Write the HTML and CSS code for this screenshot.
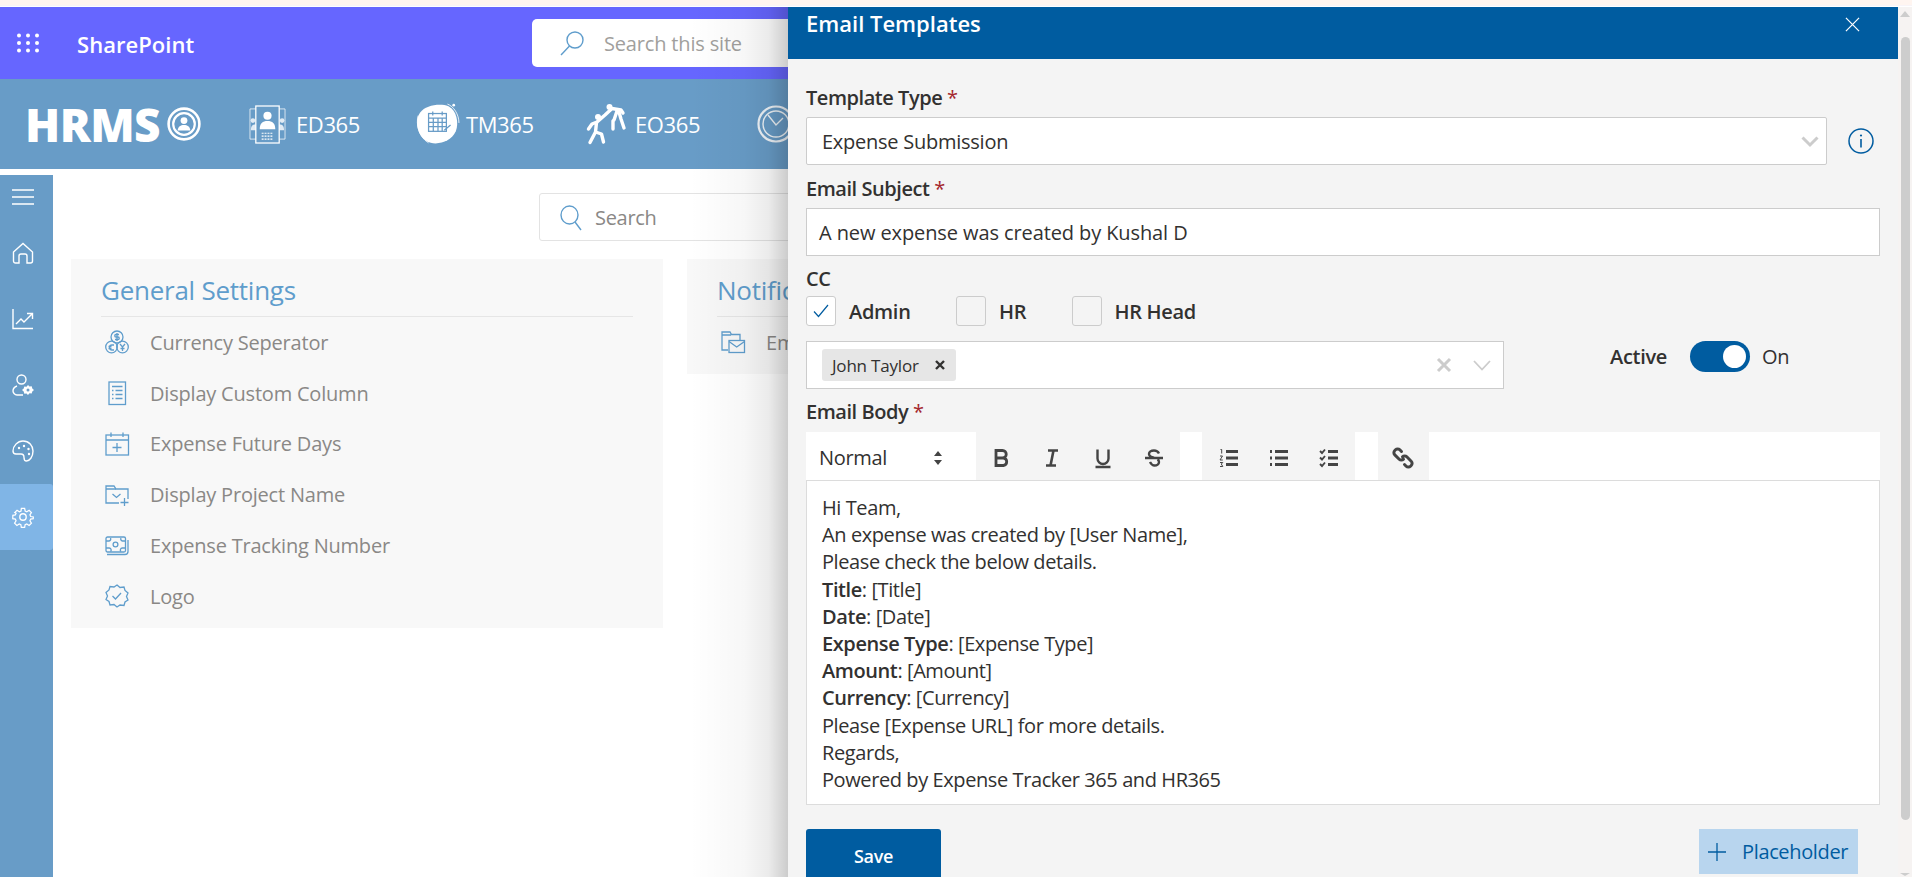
FILE: index.html
```html
<!DOCTYPE html>
<html lang="en">
<head>
<meta charset="utf-8">
<title>Email Templates</title>
<link rel="stylesheet" href="styles.css">
</head>
<body>
<div class="page">
  <div class="strip"></div>
  <header class="suitebar">
    <svg class="waffle" viewBox="0 0 24 20"><g fill="#fff"><circle cx="3" cy="2.5" r="2"/><circle cx="12" cy="2.5" r="2"/><circle cx="21" cy="2.5" r="2"/><circle cx="3" cy="10" r="2"/><circle cx="12" cy="10" r="2"/><circle cx="21" cy="10" r="2"/><circle cx="3" cy="17.5" r="2"/><circle cx="12" cy="17.5" r="2"/><circle cx="21" cy="17.5" r="2"/></g></svg>
    <span class="brand">SharePoint</span>
    <div class="site-search">
      <svg class="site-search-icon" viewBox="0 0 26 26" fill="none" stroke="#5f9dcc" stroke-width="1.4"><circle cx="16" cy="10" r="8"/><path d="M10.5 16 2 25"/></svg>
      <span>Search this site</span>
    </div>
  </header>
  <nav class="hrbar">
    <div class="logo">
      <span class="logo-text">HRMS</span>
      <svg class="logo-mark" viewBox="0 0 34 34"><circle cx="17" cy="17" r="15.4" fill="none" stroke="#fff" stroke-width="2.6"/><circle cx="17" cy="17" r="10.8" fill="none" stroke="#fff" stroke-width="2.2"/><circle cx="17" cy="13.6" r="3.4" fill="#fff"/><path d="M10.6 23.6c.5-4 3-5.6 6.4-5.6s5.900 1.600 6.400 5.600z" fill="#fff"/></svg>
    </div>
    <a class="app app-ed">
      <svg class="app-icon-ed" viewBox="0 0 38 40" fill="none" stroke="#fff"><path d="M7 4H1v31h6M31 4h6v31h-6" stroke-opacity=".75"/><rect x="7" y="1" width="24" height="38" stroke-width="1.3"/><circle cx="19" cy="11" r="4.200" fill="#fff" stroke="none"/><path d="M11 25c0-6 3-8.500 8-8.500s8 2.500 8 8.500z" fill="#fff" stroke="none"/><circle cx="4" cy="16" r="2.400" fill="#fff" fill-opacity=".8" stroke="none"/><path d="M2 26c0-4 1-6 5-6v6zM36 26c0-4-1-6-5-6v6z" fill="#fff" fill-opacity=".8" stroke="none"/><circle cx="34" cy="16" r="2.400" fill="#fff" fill-opacity=".8" stroke="none"/><path d="M13 29h12M13 32h12M13 35h12" stroke-width="1.200" stroke-dasharray="2 1"/></svg>
      <span>ED365</span>
    </a>
    <a class="app app-tm">
      <svg class="app-icon-tm" viewBox="0 0 42 40"><path d="M4 9C9 2 23 0 31 3c8 4 10 16 7 24-4 9-15 13-24 11C6 36 1 27 1 19c0-4 1-7 3-10z" fill="#fff"/><path d="M2 12C0 20 2 32 12 38M30 1c6 2 11 10 11 18" fill="none" stroke="#fff" stroke-width=".8"/><circle cx="36" cy="2" r="1.300" fill="#fff"/><g fill="none" stroke="#689cc7" stroke-width="1.200"><rect x="12" y="10" width="17" height="17"/><path d="M12 14.500h17M16 8v4M25 8v4M12 18.500h17M12 22.500h17M16.500 14.500V27M21 14.500V27M25 14.500V27M27 26l6-5"/></g></svg>
      <span>TM365</span>
    </a>
    <a class="app app-eo">
      <svg class="app-icon-eo" viewBox="0 0 40 40" fill="none" stroke="#fff" stroke-width="3.400" stroke-linecap="round" stroke-linejoin="round"><circle cx="12" cy="13" r="3" fill="#fff" stroke="none"/><circle cx="23.500" cy="3" r="3" fill="#fff" stroke="none"/><path d="M2.500 25 6 20l5-2 8-7 7-6.500 9 1.500 2 3"/><path d="M10.500 18.500 9.500 28 4 38.500M9.500 28l6 2 2 8"/><path d="M31 7l-3 9-1 1v8M33 8l2 7 3 9"/></svg>
      <span>EO365</span>
    </a>
    <svg class="app-icon-clock" viewBox="0 0 38 38" fill="none" stroke="#fff" stroke-opacity=".9"><circle cx="19" cy="19" r="17.500" stroke-width="2.200"/><circle cx="19" cy="19" r="13" stroke-width="1.400"/><path d="M11 10l8 10 7-7" stroke-width="1.400"/></svg>
  </nav>
  <div class="main">
    <aside class="sidebar">
      <div class="side-toggle"><svg class="side-icon-menu" viewBox="0 0 22 16" stroke="#fff" stroke-width="1.400"><path d="M0 1h22M0 8h22M0 15h22"/></svg></div>
      <div class="side-item"><svg class="side-icon" viewBox="0 0 22 22" fill="none" stroke="#fff" stroke-width="1.400"><path d="M1.500 10 11 1.500 20.500 10v9a2 2 0 0 1-2 2H15v-7a2 2 0 0 0-2-2H9a2 2 0 0 0-2 2v7H3.500a2 2 0 0 1-2-2z"/></svg></div>
      <div class="side-item"><svg class="side-icon" viewBox="0 0 22 22" fill="none" stroke="#fff" stroke-width="1.400"><path d="M1 1v19.500h20M4 16l5-5 3 3 8-8M15 5.500h5.500V11"/></svg></div>
      <div class="side-item"><svg class="side-icon" viewBox="0 0 22 22" fill="none" stroke="#fff" stroke-width="1.400"><circle cx="9.500" cy="5.500" r="4.500"/><path d="M5 12c-3 1-4 3.500-4 5s1.500 4 4 4h6"/><path d="M16 11l1.500 1.600 2.200-.4.600 2.200 1.700 1.500-1.700 1.500-.6 2.200-2.200-.4L16 21l-1.500-1.600-2.200.4-.6-2.200-1.700-1.500 1.700-1.500.6-2.200 2.200.4z" fill="#fff" stroke="none"/><circle cx="16" cy="16" r="1.500" fill="#689cc7" stroke="none"/></svg></div>
      <div class="side-item"><svg class="side-icon" viewBox="0 0 22 22" fill="none" stroke="#fff" stroke-width="1.400"><path d="M11 1c6 0 10 4.500 10 10 0 6-3.500 10-6.500 10-2 0-2.500-1.500-2.500-3.500 0-2-1-3.500-3-3.500H4c-2 0-3-1-3-3C1 6 5.500 1 11 1z"/><g fill="#fff" stroke="none"><circle cx="7" cy="8" r="1.200"/><circle cx="12" cy="6" r="1.200"/><circle cx="16.500" cy="9" r="1.200"/><circle cx="17" cy="14" r="1.200"/></g></svg></div>
      <div class="side-item side-item-active"><svg class="side-icon" viewBox="0 0 24 24" fill="none" stroke="#fff" stroke-width="1.500"><circle cx="12" cy="12" r="3.500"/><path d="M10 1.500h4l.6 3.200 2 .9 2.800-1.800 2.800 2.800-1.800 2.800.9 2 3.200.6v0l-.1 2-3.100.6-.9 2 1.800 2.800-2.800 2.800-2.800-1.800-2 .9-.6 3.200h-4l-.6-3.200-2-.9-2.800 1.800-2.800-2.800 1.800-2.800-.9-2-3.100-.6.100-4 3-.6.900-2L2 6.600l2.800-2.800 2.800 1.800 2-.9z" transform="translate(1.200 1.200) scale(.9)"/></svg></div>
    </aside>
    <section class="content">
      <div class="search-row">
        <div class="page-search">
          <svg class="page-search-icon" viewBox="0 0 22 26" fill="none" stroke="#5f9dcc" stroke-width="1.400"><ellipse cx="9.500" cy="10" rx="8.500" ry="9"/><path d="m15 17 6 8"/></svg>
          <span>Search</span>
        </div>
      </div>
      <div class="cards">
        <div class="card card-general">
          <h2 class="card-title">General Settings</h2>
          <ul class="card-list">
            <li class="card-item"><svg class="item-icon" viewBox="0 0 24 24" fill="none" stroke="#5f9dcc" stroke-width="1.300"><circle cx="12" cy="7" r="6"/><circle cx="6.500" cy="17" r="5.800"/><circle cx="17.500" cy="17" r="5.800"/><path d="M14 4.500h-3a1.200 1.200 0 0 0 0 2.500h2a1.200 1.200 0 0 1 0 2.500h-3M12 3v8M9 15h-2a2 2 0 0 0 0 5h2M3.500 16.500h3M3.500 18.500h3M15 14l2.500 3 2.500-3M17.500 17v4M15.500 18.500h4"/></svg><span>Currency Seperator</span></li>
            <li class="card-item"><svg class="item-icon" viewBox="0 0 24 24" fill="none" stroke="#5f9dcc" stroke-width="1.300"><rect x="4" y="1" width="16.500" height="22.500"/><path d="M7 5.500h10.500M7 9.500h1.500M10.500 9.500h7M7 13.500h1.500M10.500 13.500h7M7 17.500h1.500M10.500 17.500h7"/></svg><span>Display Custom Column</span></li>
            <li class="card-item"><svg class="item-icon" viewBox="0 0 24 24" fill="none" stroke="#5f9dcc" stroke-width="1.300"><rect x="1" y="3" width="22.500" height="20"/><path d="M1 8h22.500M6 .5v4.500M18 .5v4.500M12 11v9M7.500 15.500h9"/></svg><span>Expense Future Days</span></li>
            <li class="card-item"><svg class="item-icon" viewBox="0 0 24 24" fill="none" stroke="#5f9dcc" stroke-width="1.300"><path d="M14 20H1V3h8l2 3h12v10"/><path d="M1 6h10M7.500 11l4 3.500 4-3.500M19.500 15v8M15.500 19.500h8"/></svg><span>Display Project Name</span></li>
            <li class="card-item"><svg class="item-icon" viewBox="0 0 24 24" fill="none" stroke="#5f9dcc" stroke-width="1.300"><rect x="1" y="3" width="19.500" height="15" rx="1.500"/><circle cx="10.500" cy="10.500" r="2.400"/><path d="M1 7h3a2 2 0 0 0 1.500-3M20.500 7h-3A2 2 0 0 1 16 4M1 14h3a2 2 0 0 1 1.500 3.500M20.500 14h-3a2 2 0 0 0-1.500 3.500M2 20.500h18a3 3 0 0 0 3-3V6"/></svg><span>Expense Tracking Number</span></li>
            <li class="card-item"><svg class="item-icon" viewBox="0 0 24 24" fill="none" stroke="#5f9dcc" stroke-width="1.300"><path d="M12 1l3 2.500 4-.5 1 3.500 3 2.500-1.500 3.500 1.500 3.500-3 2-1 3.500-4-.5L12 23l-3-2.500-4 .5-1-3.500-3-2L2.500 12 1 8.500 4 6l1-3.500 4 .5z"/><path d="m7.500 12 3 3 5.500-6"/></svg><span>Logo</span></li>
          </ul>
        </div>
        <div class="card card-notify">
          <h2 class="card-title">Notifications</h2>
          <ul class="card-list">
            <li class="card-item"><svg class="item-icon" viewBox="0 0 24 24" fill="none" stroke="#5f9dcc" stroke-width="1.300"><path d="M7 20H1V2h8l1.500 2.500H19V10M1 5h9"/><rect x="8" y="10.500" width="15.500" height="12"/><path d="m8 11.500 7.700 5.500 7.800-5.500"/></svg><span>Email Templates</span></li>
          </ul>
        </div>
      </div>
    </section>
  </div>

  <div class="panel-shade"></div>
  <aside class="panel">
    <div class="panel-header">
      <h1 class="panel-title">Email Templates</h1>
      <svg class="panel-close" viewBox="0 0 16 16" stroke="#fff" stroke-width="1.300"><path d="m1 1 14 14M15 1 1 15"/></svg>
    </div>
    <div class="panel-body">
      <label class="field-label label-type">Template Type <em>*</em></label>
      <div class="type-row">
        <div class="select-box">
          <span>Expense Submission</span>
          <svg class="chev" viewBox="0 0 18 11" fill="none" stroke="#cccccc" stroke-width="3"><path d="m1.500 1.500 7.500 7.500 7.500-7.500"/></svg>
        </div>
        <svg class="info-icon" viewBox="0 0 26 26" fill="none" stroke="#005ca0"><circle cx="13" cy="13" r="12" stroke-width="1.500"/><path d="M13 11v8.500" stroke-width="1.600"/><circle cx="13" cy="7.500" r="1.100" fill="#005ca0" stroke="none"/></svg>
      </div>
      <label class="field-label label-subject">Email Subject <em>*</em></label>
      <div class="text-box">A new expense was created by Kushal D</div>
      <label class="field-label label-cc">CC</label>
      <div class="check-row">
        <div class="check check-admin"><span class="check-box"><svg class="check-mark" viewBox="0 0 16 14" fill="none" stroke="#005ca0" stroke-width="1.200"><path d="m1 7.500 4.500 5L15 1"/></svg></span><span>Admin</span></div>
        <div class="check check-hr"><span class="check-box"></span><span>HR</span></div>
        <div class="check"><span class="check-box"></span><span>HR Head</span></div>
      </div>
      <div class="people-row">
        <div class="people-box">
          <span class="chip"><span>John Taylor</span><svg class="chip-x" viewBox="0 0 10 10" stroke="#323130" stroke-width="2.400"><path d="m1 1 8 8M9 1 1 9"/></svg></span>
          <svg class="clear-x" viewBox="0 0 16 16" stroke="#cccccc" stroke-width="3"><path d="m2 2 12 12M14 2 2 14"/></svg>
          <svg class="people-chev" viewBox="0 0 18 11" fill="none" stroke="#cccccc" stroke-width="1.800"><path d="m1 1 8 8.500L17 1"/></svg>
        </div>
        <div class="toggle-group">
          <span class="toggle-label">Active</span>
          <span class="toggle"><span class="toggle-knob"></span></span>
          <span class="toggle-state">On</span>
        </div>
      </div>
      <label class="field-label label-body">Email Body <em>*</em></label>
      <div class="toolbar">
        <div class="tool-select"><span>Normal</span><svg class="tool-updown" viewBox="0 0 10 16" fill="#444"><path d="M5 1l4 5H1zM5 15l4-5H1z"/></svg></div>
        <div class="tool-group tool-group-format">
          <svg class="tool" viewBox="0 0 20 20" fill="none" stroke="#444" stroke-width="2.800"><path d="M5 2.500h6.500a3.500 3.500 0 0 1 0 7.500H5zM5 10h7.500a3.800 3.800 0 0 1 0 7.500H5z"/></svg>
          <svg class="tool" viewBox="0 0 20 20" fill="none" stroke="#444" stroke-width="2.600"><path d="M6 2.500h10M4 17.500h10M11.500 2.500l-3 15"/></svg>
          <svg class="tool" viewBox="0 0 20 20" fill="none" stroke="#444" stroke-width="2.400"><path d="M4.500 1.500v9a5.500 5.500 0 0 0 11 0v-9M2.500 19h15"/></svg>
          <svg class="tool" viewBox="0 0 20 20" fill="none" stroke="#444" stroke-width="2.400"><path d="M15 5.500C14 3.500 12 2.500 10 2.500c-3 0-5 1.500-5 3.500s2 3 5 3.700M6 14c1 2 2 3.500 4.500 3.500s4.500-1.500 4.500-3.500c0-1.200-.5-2-1.500-2.600M1 10h18"/></svg>
        </div>
        <div class="tool-group tool-group-list">
          <svg class="tool" viewBox="0 0 20 20" fill="none" stroke="#444" stroke-width="2.800"><path d="M7 3.500h12M7 10h12M7 16.500h12"/><path d="M1.500 1.500h1.200v4M1 8h2.500L1 12h2.800M1 14.500h2.800l-1.500 1.500 1.500 2.500H1" stroke-width="1"/></svg>
          <svg class="tool" viewBox="0 0 20 20" fill="none" stroke="#444" stroke-width="2.800"><path d="M6 3.500h13M6 10h13M6 16.500h13"/><path d="M1 3.500h2M1 10h2M1 16.500h2"/></svg>
          <svg class="tool" viewBox="0 0 20 20" fill="none" stroke="#444" stroke-width="2.800"><path d="M9 3.500h10M9 10h10M9 16.500h10"/><path d="m1 3 2 2 3-3.500M1 9.500l2 2 3-3.500M1 16l2 2 3-3.500" stroke-width="1.900"/></svg>
        </div>
        <div class="tool-group tool-group-link">
          <svg class="tool" viewBox="0 0 20 20" fill="none" stroke="#444" stroke-width="3" stroke-linecap="round"><path d="M8.500 3.500 6.800 1.800a3 3 0 0 0-4.300 0l-.7.700a3 3 0 0 0 0 4.300l4.400 4.400a3 3 0 0 0 4.300 0M11.500 16.500l1.700 1.700a3 3 0 0 0 4.300 0l.7-.7a3 3 0 0 0 0-4.300l-4.400-4.400a3 3 0 0 0-4.300 0"/></svg>
        </div>
      </div>
      <div class="editor">
        <p>Hi Team,</p>
        <p>An expense was created by [User Name],</p>
        <p>Please check the below details.</p>
        <p><b>Title</b>: [Title]</p>
        <p><b>Date</b>: [Date]</p>
        <p><b>Expense Type</b>: [Expense Type]</p>
        <p><b>Amount</b>: [Amount]</p>
        <p><b>Currency</b>: [Currency]</p>
        <p>Please [Expense URL] for more details.</p>
        <p>Regards,</p>
        <p>Powered by Expense Tracker 365 and HR365</p>
      </div>
      <div class="actions">
        <button class="save-btn">Save</button>
        <button class="placeholder-btn"><svg class="plus" viewBox="0 0 18 18" stroke="#005ca0" stroke-width="1.300"><path d="M9 0v18M0 9h18"/></svg><span>Placeholder</span></button>
      </div>
    </div>
  </aside>
  <div class="scrollbar">
    <span class="scroll-up"></span>
    <span class="scroll-thumb"></span>
    <span class="scroll-down"></span>
  </div>
</div>
</body>
</html>
```

FILE: styles.css
```css
* { box-sizing: border-box; }
html, body { margin: 0; height: 100%; overflow: hidden; background: #fff; }
body { font-family: "Open Sans", "Noto Sans", sans-serif; color: #323130; }
h1, h2, p, ul { margin: 0; padding: 0; }
ul { list-style: none; }
svg { display: block; flex: none; overflow: visible; }

.page { position: relative; width: 1912px; height: 877px; overflow: hidden; }
.strip { height: 7px; background: linear-gradient(#fff5f0 0 5px, #f8f4f8 5px 6px, #fff 6px); }

.suitebar { height: 72px; background: #6666ff; display: flex; align-items: center; }
.waffle { width: 24px; height: 20px; margin-left: 16px; }
.brand { flex: 0 0 455px; margin-left: 37px; padding-top: 1px; font-size: 22px; font-weight: 600; color: #fff; letter-spacing: .05px; }
.site-search { width: 400px; height: 48px; background: #fff; border-radius: 5px; display: flex; align-items: center; color: #a19f9d; font-size: 20px; letter-spacing: -.17px; }
.site-search-icon { width: 26px; height: 26px; margin: 0 19px 0 27px; }

.hrbar { height: 90px; background: #689cc7; display: flex; align-items: center; color: #fff; font-size: 22px; }
.logo { display: flex; align-items: center; width: 249px; padding-left: 25px; }
.logo-text { font-size: 46px; font-weight: 800; line-height: 1; letter-spacing: -.6px; width: 142px; }
.logo-mark { width: 34px; height: 34px; }
.app { display: flex; align-items: center; letter-spacing: -.4px; }
.app-icon-ed { width: 37px; height: 39px; margin-right: 10px; }
.app-icon-tm { width: 44px; height: 42px; margin-right: 6px; }
.app-icon-eo { width: 40px; height: 40px; margin-right: 9px; }
.app-ed { width: 167px; }
.app-tm { width: 170px; }
.app-eo { width: 171px; }
.app-icon-clock { width: 38px; height: 38px; }

.main { height: 708px; display: flex; padding-top: 6px; }
.sidebar { width: 53px; background: #689cc7; display: flex; flex-direction: column; }
.side-toggle { height: 45px; padding: 0 0 2px 12px; display: flex; align-items: center; }
.side-icon-menu { width: 22px; height: 16px; }
.side-item { height: 66px; display: flex; align-items: center; padding-left: 12px; }
.side-item-active { background: #80b5e6; border-radius: 0 3px 3px 0; }
.side-icon { width: 22px; height: 22px; }

.content { flex: 1; padding-left: 18px; }
.search-row { padding: 18px 0 0 468px; }
.page-search { width: 500px; height: 48px; border: 1px solid #e3e3e3; border-radius: 3px; display: flex; align-items: center; color: #8a8886; font-size: 20px; letter-spacing: -.3px; padding-top: 1px; }
.page-search-icon { width: 22px; height: 26px; margin: 0 13px 0 20px; }

.cards { display: flex; align-items: flex-start; gap: 24px; margin-top: 18px; }
.card { background: #f8f8f8; padding: 13px 30px 0; height: 369px; }
.card-general { width: 592px; }
.card-notify { width: 592px; height: 115px; padding-right: 30px; }
.card-title { font-size: 26px; font-weight: 400; color: #5f9dcc; letter-spacing: -.25px; line-height: 36px; height: 45px; border-bottom: 1px solid #e6e6e6; white-space: nowrap; }
.card-item { height: 50.800px; display: flex; align-items: center; font-size: 20px; color: #8a8886; letter-spacing: -.2px; white-space: nowrap; padding-left: 4px; }
.item-icon { width: 24px; height: 24px; margin-right: 21px; }

.panel-shade { position: absolute; top: 7px; bottom: 0; left: 690px; width: 98px; background: linear-gradient(90deg, rgba(0,0,0,0), rgba(0,0,0,.03) 55%, rgba(0,0,0,.08) 80%, rgba(0,0,0,.2)); }
.panel { position: absolute; top: 7px; left: 788px; width: 1110px; bottom: 0; background: #f4f4f4; }
.panel-header { height: 52px; background: #005ca0; color: #fff; display: flex; justify-content: space-between; padding: 0 38px 0 18px; }
.panel-title { font-size: 22px; font-weight: 600; line-height: 32px; letter-spacing: 0; }
.panel-close { width: 15px; height: 15px; margin-top: 10px; }

.panel-body { padding: 0 18px; }
.field-label { display: block; font-size: 20px; font-weight: 600; letter-spacing: -.45px; line-height: 24px; color: #323130; }
.field-label em { font-style: normal; font-weight: 400; color: #a4262c; }
.label-type { padding-top: 27px; height: 58px; }
.label-subject { margin-top: 12px; height: 31px; }
.label-cc { margin-top: 11px; height: 29px; }
.label-body { margin-top: 11px; height: 32px; }

.type-row { display: flex; align-items: center; }
.select-box { width: 1021px; height: 48px; background: #fff; border: 1px solid #cccccc; border-radius: 2px; display: flex; align-items: center; justify-content: space-between; padding: 1px 7px 0 15px; font-size: 20px; letter-spacing: -.25px; }
.chev { width: 18px; height: 11px; }
.info-icon { width: 26px; height: 26px; margin-left: 21px; }
.text-box { height: 48px; background: #fff; border: 1px solid #cccccc; padding: 0 12px; display: flex; align-items: center; font-size: 20px; letter-spacing: -.1px; }

.check-row { display: flex; height: 30px; }
.check { display: flex; align-items: center; gap: 13px; font-size: 20px; font-weight: 600; letter-spacing: -.3px; }
.check-admin { width: 150px; }
.check-hr { width: 115.500px; }
.check-box { width: 30px; height: 30px; border: 1px solid #cccccc; border-radius: 3px; display: flex; align-items: center; justify-content: center; }
.check-admin .check-box { background: #fff; }
.check-mark { width: 16px; height: 14px; }

.people-row { display: flex; align-items: flex-start; margin-top: 15px; }
.people-box { width: 698px; height: 48px; background: #fff; border: 1px solid #cccccc; display: flex; align-items: center; padding: 0 12px 0 15px; }
.chip { width: 134px; height: 32px; background: #e6e6e6; border-radius: 3px; display: flex; align-items: center; justify-content: space-between; padding: 0 11px 0 10px; font-size: 17px; letter-spacing: -.2px; }
.chip-x { width: 10px; height: 10px; }
.clear-x { width: 16px; height: 16px; margin-left: auto; }
.people-chev { width: 18px; height: 11px; margin-left: 21px; }
.toggle-group { display: flex; align-items: center; margin: -1px 0 0 106px; font-size: 20px; height: 32px; }
.toggle-label { font-weight: 600; letter-spacing: -.3px; width: 80px; }
.toggle { width: 60px; height: 31px; background: #005ca0; border-radius: 16px; display: flex; justify-content: flex-end; align-items: center; padding-right: 4px; }
.toggle-knob { width: 23px; height: 23px; background: #fff; border-radius: 50%; }
.toggle-state { margin-left: 12px; letter-spacing: -.3px; }

.toolbar { display: flex; height: 48px; background: #fff; }
.tool-select { width: 170px; display: flex; align-items: center; justify-content: space-between; padding: 3px 33px 0 13px; font-size: 20px; letter-spacing: -.35px; }
.tool-updown { width: 10px; height: 16px; }
.tool-group { display: flex; align-items: center; background: #f4f4f4; padding-top: 3px; }
.tool { width: 20px; height: 20px; }
.tool-group-format { width: 204px; margin-right: 22px; padding-left: 15px; gap: 31px; }
.tool-group-list { width: 153px; margin-right: 23px; padding-left: 17px; gap: 30px; }
.tool-group-link { width: 51px; padding-left: 15px; }

.editor { height: 325px; background: #fff; border: 1px solid #dcdcdc; padding: 13px 15px; font-size: 20px; line-height: 27.200px; letter-spacing: -.41px; }
.editor b { font-weight: 600; }

.actions { display: flex; justify-content: space-between; align-items: flex-start; margin-top: 24px; padding-right: 22px; }
.save-btn { width: 135px; height: 54px; border: 0; border-radius: 3px 3px 0 0; background: #005ca0; color: #fff; font: 600 18px "Open Sans", "Noto Sans", sans-serif; letter-spacing: -.3px; }
.placeholder-btn { width: 159px; height: 45px; border: 0; background: #b8d5ee; color: #005ca0; font: 400 20px "Open Sans", "Noto Sans", sans-serif; letter-spacing: -.35px; display: flex; align-items: center; padding: 0 0 0 9px; }
.plus { width: 18px; height: 18px; margin-right: 16px; }

.scrollbar { position: absolute; top: 7px; right: 0; bottom: 0; width: 14px; background: #f6f3f2; display: flex; flex-direction: column; align-items: center; }
.scroll-up { margin-top: 4px; width: 0; height: 0; border: 5px solid transparent; border-top: 0; border-bottom: 6px solid #cdcdcd; }
.scroll-thumb { margin-top: 20px; width: 9px; height: 783px; background: #cdcdcd; border-radius: 5px; }
.scroll-down { margin-top: auto; margin-bottom: 1px; width: 0; height: 0; border: 5px solid transparent; border-bottom: 0; border-top: 3px solid #cdcdcd; }
```
